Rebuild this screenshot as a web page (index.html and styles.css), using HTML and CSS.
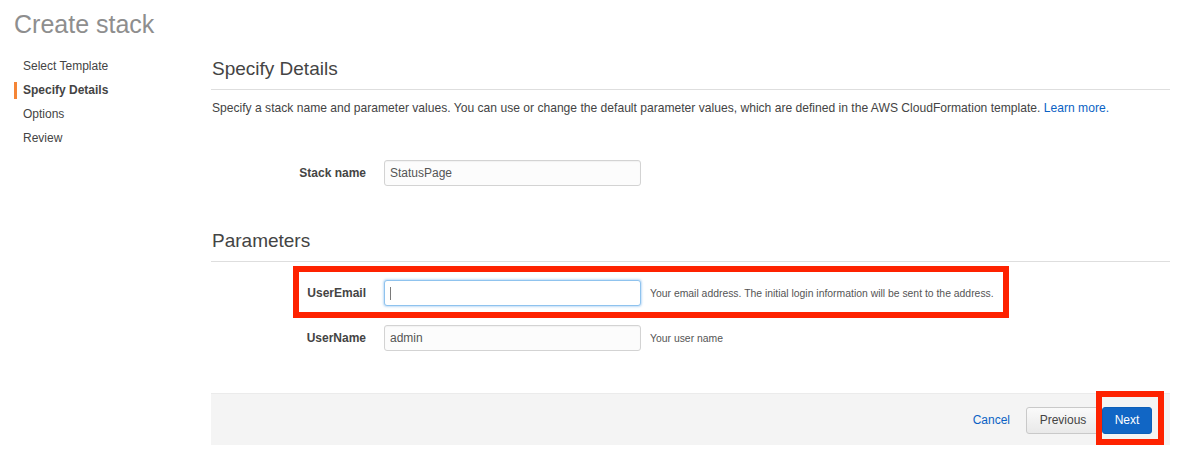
FILE: index.html
```html
<!DOCTYPE html>
<html lang="en">
<head>
<meta charset="utf-8">
<title>Create stack</title>
<link rel="stylesheet" href="styles.css">
</head>
<body>
<h1 class="page-title">Create stack</h1>
<div class="layout">
  <nav class="steps">
    <ul class="step-list">
      <li class="step">Select Template</li>
      <li class="step step-active">Specify Details</li>
      <li class="step">Options</li>
      <li class="step">Review</li>
    </ul>
  </nav>
  <main class="content">
    <h2 class="section-title">Specify Details</h2>
    <p class="intro">Specify a stack name and parameter values. You can use or change the default parameter values, which are defined in the AWS CloudFormation template. <a class="link" href="#">Learn more.</a></p>

    <div class="form-row row-stack">
      <label class="field-label">Stack name</label>
      <input class="text-input" type="text" value="StatusPage">
    </div>

    <h2 class="section-title section-params">Parameters</h2>

    <div class="form-row row-email">
      <label class="field-label">UserEmail</label>
      <span class="input-wrap">
        <input class="text-input text-input-focus" type="text" value="">
        <span class="caret"></span>
      </span>
      <span class="help">Your email address. The initial login information will be sent to the address.</span>
      <span class="highlight highlight-row"></span>
    </div>

    <div class="form-row row-name">
      <label class="field-label">UserName</label>
      <input class="text-input" type="text" value="admin">
      <span class="help">Your user name</span>
    </div>

    <div class="footer-bar">
      <a class="link cancel" href="#">Cancel</a>
      <button class="btn btn-secondary" type="button">Previous</button>
      <span class="next-wrap">
        <button class="btn btn-primary" type="button">Next</button>
        <span class="highlight highlight-next"></span>
      </span>
    </div>
  </main>
</div>
</body>
</html>
```

FILE: styles.css
```css
* {
  box-sizing: border-box;
}

html, body {
  margin: 0;
  padding: 0;
  background: #ffffff;
}

body {
  font-family: "Liberation Sans", Arial, Helvetica, sans-serif;
  color: #444444;
  font-size: 12px;
  width: 1185px;
  height: 474px;
  overflow: hidden;
}

.page-title {
  margin: 0;
  padding: 9px 0 0 14px;
  font-size: 25px;
  line-height: 30px;
  font-weight: normal;
  color: #8e8e8e;
}

.layout {
  display: flex;
}

.steps {
  width: 211px;
  flex: none;
  padding: 19px 0 0 14px;
}

.step-list {
  list-style: none;
  margin: 0;
  padding: 0;
  display: flex;
  flex-direction: column;
  gap: 7px;
}

.step {
  border-left: 3px solid transparent;
  padding-left: 6px;
  line-height: 17px;
  font-size: 12px;
  color: #444444;
}

.step-active {
  border-left-color: #f58536;
  font-weight: bold;
}

.content {
  width: 959px;
  flex: none;
}

.section-title {
  margin: 18px 0 0 0;
  padding: 0 0 8px 1px;
  font-size: 19px;
  line-height: 24px;
  font-weight: normal;
  color: #444444;
  border-bottom: 1px solid #dedede;
}

.section-params {
  margin-top: 43px;
  padding-bottom: 8px;
}

.intro {
  margin: 10px 0 0 1px;
  font-size: 12.1px;
  line-height: 16px;
  color: #444444;
}

.link {
  color: #0b62c4;
  text-decoration: none;
}

.form-row {
  position: relative;
  display: flex;
  align-items: center;
  height: 26px;
}

.row-stack {
  margin-top: 44px;
}

.row-email {
  margin-top: 18px;
}

.row-name {
  margin-top: 19px;
}

.field-label {
  width: 155px;
  text-align: right;
  font-weight: bold;
  font-size: 12px;
  color: #444444;
  margin-right: 18px;
}

.input-wrap {
  position: relative;
  display: flex;
}

.text-input {
  width: 257px;
  height: 26px;
  border: 1px solid #d3d3d3;
  border-radius: 3px;
  background: #fcfcfc;
  padding: 0 5px;
  font-family: "Liberation Sans", Arial, Helvetica, sans-serif;
  font-size: 12px;
  color: #555555;
  outline: none;
  box-shadow: inset 0 1px 1px rgba(0, 0, 0, 0.04);
}

.text-input-focus {
  background: #ffffff;
  border-color: #8fc3ee;
  box-shadow: 0 0 2px 1px rgba(120, 180, 235, 0.45);
}

.caret {
  position: absolute;
  left: 6px;
  top: 7px;
  width: 1px;
  height: 13px;
  background: #7a7a7a;
}

.help {
  margin-left: 9px;
  font-size: 10.4px;
  color: #555555;
}

.highlight {
  position: absolute;
  border: 6px solid #fe2200;
  pointer-events: none;
}

.highlight-row {
  left: 82px;
  top: -14px;
  width: 716px;
  height: 52px;
}

.footer-bar {
  margin-top: 42px;
  height: 52px;
  background: #f4f4f4;
  border-top: 1px solid #ebebeb;
  display: flex;
  align-items: center;
  justify-content: flex-end;
  padding: 1px 18px 0 0;
}

.cancel {
  font-size: 12px;
  margin-right: 16px;
}

.btn {
  height: 27px;
  border-radius: 3px;
  font-family: "Liberation Sans", Arial, Helvetica, sans-serif;
  font-size: 12px;
  padding: 0;
  cursor: pointer;
}

.btn-secondary {
  width: 74px;
  border: 1px solid #c9c9c9;
  background: linear-gradient(#fafafa, #e9e9e9);
  color: #444444;
  margin-right: 2px;
}

.next-wrap {
  position: relative;
  display: flex;
}

.btn-primary {
  width: 50px;
  border: 1px solid #0d5fb8;
  background: #1166c5;
  color: #ffffff;
}

.highlight-next {
  left: -6px;
  top: -16px;
  width: 68px;
  height: 54px;
}
```
